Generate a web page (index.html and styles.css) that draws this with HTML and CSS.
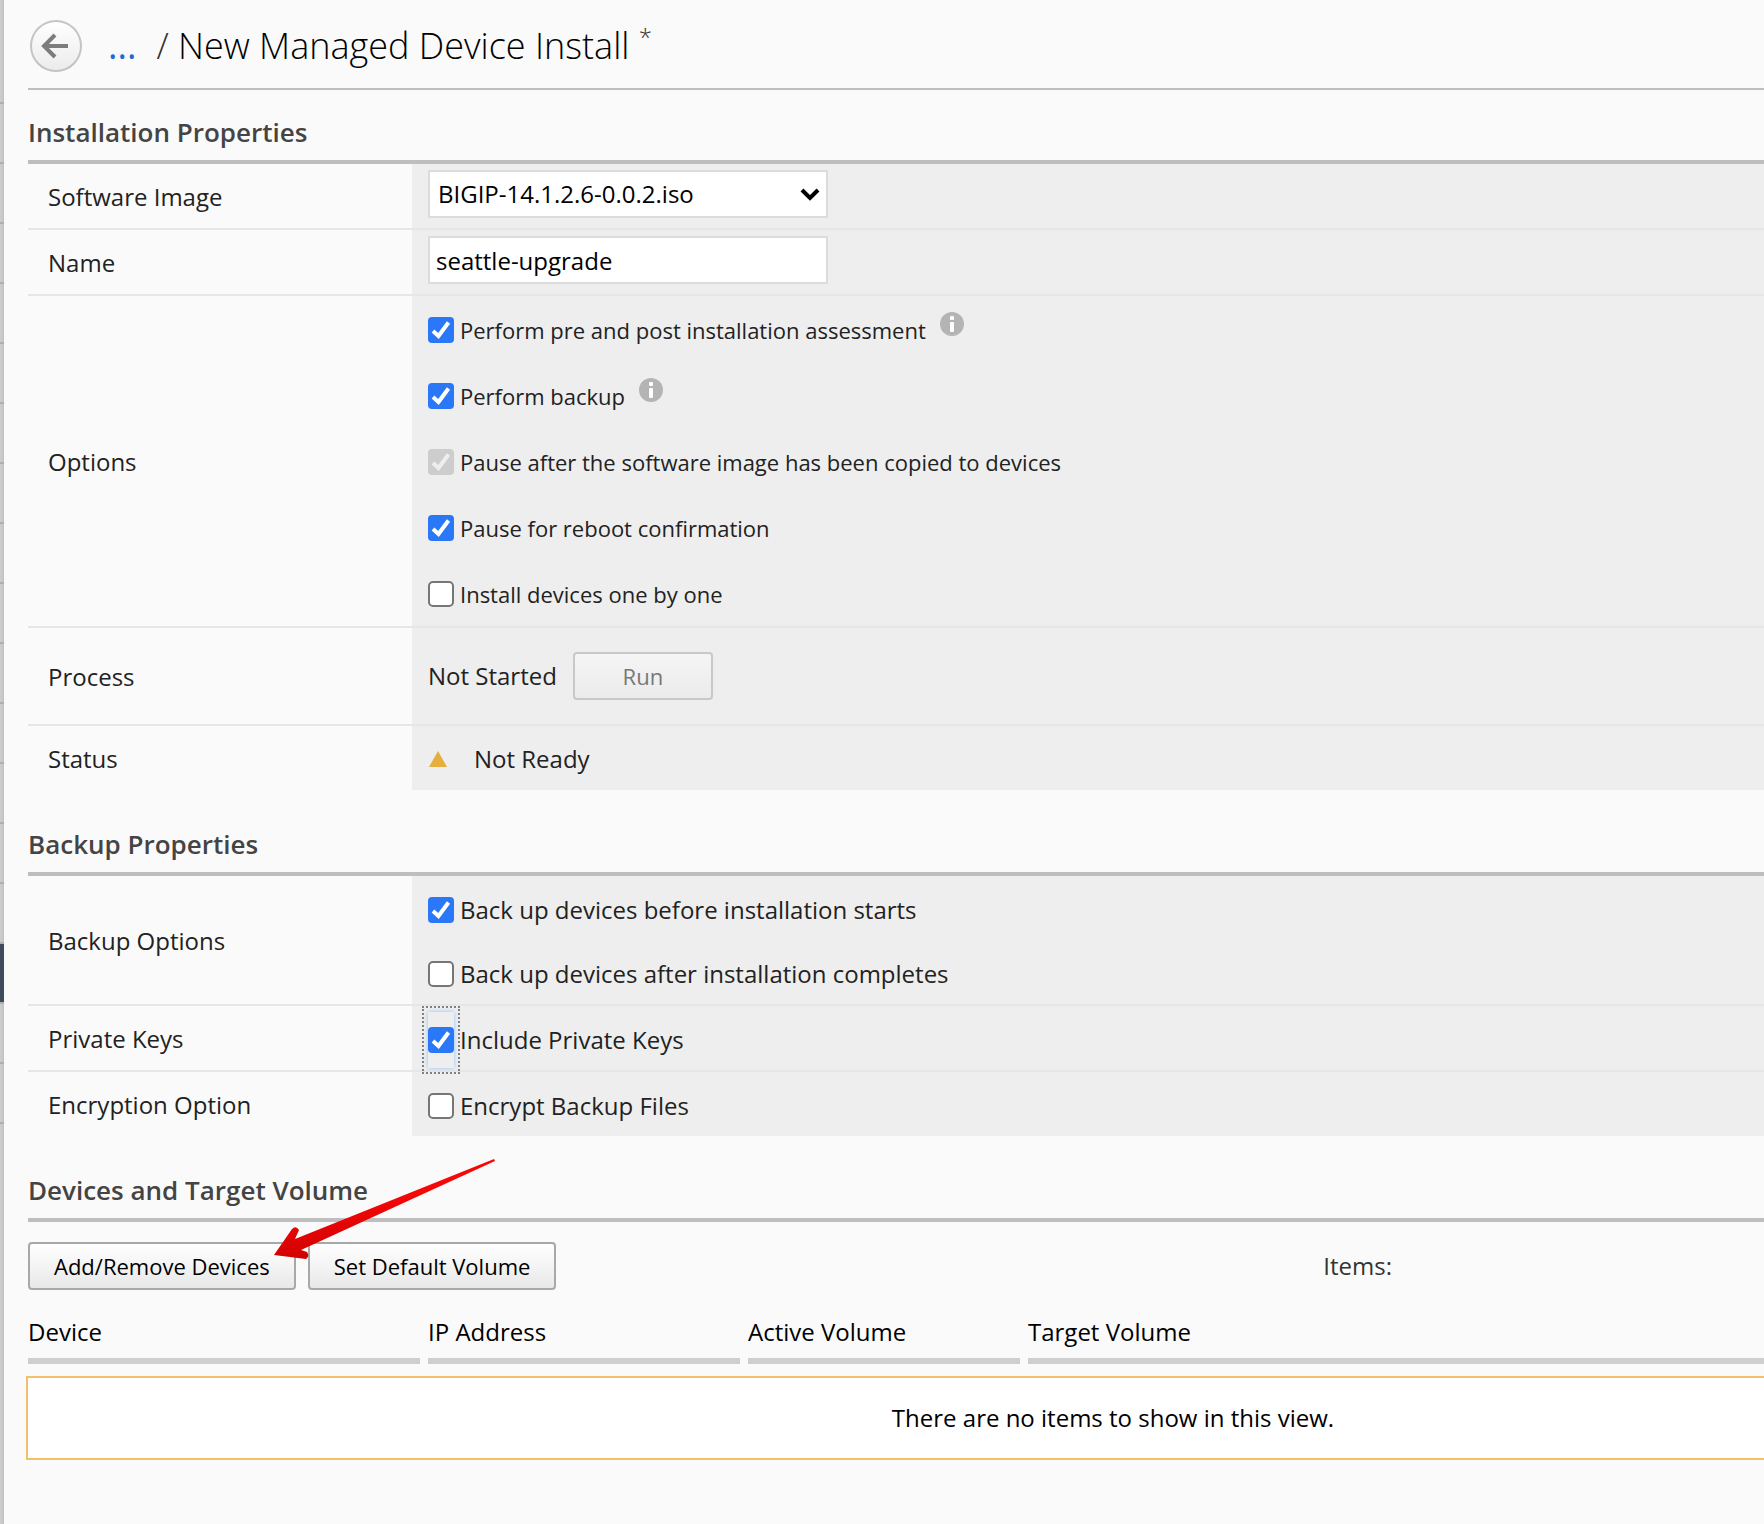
FILE: index.html
```html
<!DOCTYPE html>
<html lang="en">
<head>
<meta charset="utf-8">
<title>New Managed Device Install</title>
<link rel="stylesheet" href="styles.css">
</head>
<body>
<div class="app">
  <div class="rail" aria-hidden="true">
    <span class="rail-item rail-top"></span>
    <span class="rail-item"></span><span class="rail-item"></span><span class="rail-item"></span><span class="rail-item"></span>
    <span class="rail-item"></span><span class="rail-item"></span><span class="rail-item"></span><span class="rail-item"></span>
    <span class="rail-item"></span><span class="rail-item"></span><span class="rail-item"></span><span class="rail-item"></span>
    <span class="rail-item"></span><span class="rail-item"></span>
    <span class="rail-item active"></span>
    <span class="rail-item"></span><span class="rail-item"></span>
  </div>
  <main class="page">
    <header class="page-head">
      <button class="back" type="button" aria-label="Back">
        <svg viewBox="0 0 52 52" width="52" height="52"><path d="M38 26H15M25 15L14 26L25 37" fill="none" stroke="#7c7c7c" stroke-width="4"/></svg>
      </button>
      <a class="crumb" href="#">...</a>
      <h1 class="title"><span class="slash">/</span> New Managed Device Install <sup class="dirty">*</sup></h1>
    </header>

    <section class="section">
      <h2 class="section-title">Installation Properties</h2>
      <div class="props">
        <div class="row">
          <label class="row-label" for="image">Software Image</label>
          <div class="row-value has-field">
            <div class="select-wrap">
              <select class="field" id="image"><option>BIGIP-14.1.2.6-0.0.2.iso</option></select>
              <svg class="chevron" viewBox="0 0 20 14" width="20" height="14"><path d="M2 3L10 11L18 3" fill="none" stroke="#000" stroke-width="4"/></svg>
            </div>
          </div>
        </div>
        <div class="row">
          <label class="row-label" for="name">Name</label>
          <div class="row-value has-field"><input class="field" id="name" type="text" value="seattle-upgrade"></div>
        </div>
        <div class="row">
          <div class="row-label">Options</div>
          <div class="row-value stack small">
            <div class="option"><input class="check" type="checkbox" id="o1" checked><label for="o1">Perform pre and post installation assessment</label>
              <svg class="info" viewBox="0 0 24 24" width="24" height="24"><circle cx="12" cy="12" r="12" fill="#b4b4b4"/><rect x="10" y="4" width="4" height="4" rx="1" fill="#fff"/><rect x="10" y="10" width="4" height="10" rx="1" fill="#fff"/></svg></div>
            <div class="option"><input class="check" type="checkbox" id="o2" checked><label for="o2">Perform backup</label>
              <svg class="info" viewBox="0 0 24 24" width="24" height="24"><circle cx="12" cy="12" r="12" fill="#b4b4b4"/><rect x="10" y="4" width="4" height="4" rx="1" fill="#fff"/><rect x="10" y="10" width="4" height="10" rx="1" fill="#fff"/></svg></div>
            <div class="option"><input class="check" type="checkbox" id="o3" checked disabled><label for="o3">Pause after the software image has been copied to devices</label></div>
            <div class="option"><input class="check" type="checkbox" id="o4" checked><label for="o4">Pause for reboot confirmation</label></div>
            <div class="option"><input class="check" type="checkbox" id="o5"><label for="o5">Install devices one by one</label></div>
          </div>
        </div>
        <div class="row row-tall">
          <div class="row-label">Process</div>
          <div class="row-value"><span>Not Started</span><button class="btn btn-run" type="button" disabled>Run</button></div>
        </div>
        <div class="row">
          <div class="row-label">Status</div>
          <div class="row-value status"><svg viewBox="0 0 20 18" width="20" height="18"><path d="M10 1L19 17H1Z" fill="#e5ae3d"/></svg><span>Not Ready</span></div>
        </div>
      </div>
    </section>

    <section class="section">
      <h2 class="section-title">Backup Properties</h2>
      <div class="props">
        <div class="row">
          <div class="row-label">Backup Options</div>
          <div class="row-value stack compact">
            <div class="option"><input class="check" type="checkbox" id="b1" checked><label for="b1">Back up devices before installation starts</label></div>
            <div class="option"><input class="check" type="checkbox" id="b2"><label for="b2">Back up devices after installation completes</label></div>
          </div>
        </div>
        <div class="row">
          <div class="row-label">Private Keys</div>
          <div class="row-value single"><div class="option focused"><input class="check" type="checkbox" id="pk" checked><label for="pk">Include Private Keys</label></div></div>
        </div>
        <div class="row">
          <div class="row-label">Encryption Option</div>
          <div class="row-value single"><div class="option"><input class="check" type="checkbox" id="en"><label for="en">Encrypt Backup Files</label></div></div>
        </div>
      </div>
    </section>

    <section class="section">
      <h2 class="section-title">Devices and Target Volume</h2>
      <div class="toolbar">
        <div class="add-wrap">
          <button class="btn" type="button">Add/Remove Devices</button>
          <svg class="arrow" viewBox="0 0 224 104" width="224" height="104">
            <defs><linearGradient id="red" x1="0" y1="0" x2="0.300" y2="1"><stop offset="0.500" stop-color="#f40808"/><stop offset="1" stop-color="#cc0000"/></linearGradient></defs>
            <path d="M0 96L18 70Q22 66 25 71L21 80L220 0L221 2L27 91L33 93Q36 97 32 100Z" fill="url(#red)"/>
          </svg>
        </div>
        <button class="btn" type="button">Set Default Volume</button>
        <span class="items">Items:</span>
      </div>
      <table class="devices">
        <thead>
          <tr><th class="c-device">Device</th><th class="c-ip">IP Address</th><th class="c-active">Active Volume</th><th>Target Volume</th></tr>
        </thead>
      </table>
      <p class="empty">There are no items to show in this view.</p>
    </section>
  </main>
</div>
</body>
</html>
```
FILE: styles.css
```css
*, *::before, *::after { box-sizing: border-box; }

body {
  margin: 0;
  background: #fafafa;
  color: #222;
  font: 24px/32px "Open Sans", "Noto Sans", sans-serif;
}

.app { display: flex; min-height: 100vh; overflow: hidden; }

.rail {
  flex: 0 0 4px;
  display: flex;
  flex-direction: column;
  background: linear-gradient(90deg, #cdced0, #bfc1c3);
}
.rail-item { height: 60px; border-bottom: 2px solid #acb0b7; }
.rail-top { height: 104px; }
.rail-item.active { background: #3f4a5d; }

.page { flex: 1; min-width: 0; padding-left: 24px; }

.page-head {
  display: flex;
  align-items: center;
  height: 90px;
  padding-top: 4px;
  border-bottom: 2px solid #bebebe;
}
.back {
  width: 52px;
  height: 52px;
  margin: 0 26px 0 2px;
  padding: 0;
  border: 0;
  border-radius: 50%;
  background: linear-gradient(#fff, #ebebeb);
  box-shadow: inset 0 0 0 2px #c4c4c4;
}
.back svg { display: block; }
.crumb { color: #2468d2; font-size: 36px; text-decoration: none; }
.title {
  margin: 0 0 0 20px;
  color: #000;
  font-size: 36px;
  font-weight: 300;
  line-height: 48px;
}
.slash { color: #333; }
.dirty { font-size: 24px; line-height: 0; color: #333; }

.section { padding-top: 24px; }
.section + .section { padding-top: 36px; }
.section-title {
  margin: 0;
  padding-bottom: 10px;
  border-bottom: 4px solid #bebebe;
  color: #444;
  font-size: 26px;
  font-weight: 600;
  line-height: 36px;
}

.row { display: flex; min-height: 66px; border-bottom: 2px solid #e6e6e6; }
.row:last-child { min-height: 64px; border-bottom: 0; }
.row-tall { min-height: 98px; }
.row-label { flex: 0 0 384px; display: flex; align-items: center; padding: 2px 0 0 20px; }
.row-value {
  flex: 1;
  display: flex;
  align-items: center;
  gap: 16px;
  padding-left: 16px;
  background: #eee;
}
.has-field { padding-bottom: 4px; }
.single { padding-top: 4px; }
.stack { flex-direction: column; align-items: flex-start; gap: 0; }
.small { font-size: 22px; }
.small .option { height: 66px; padding-top: 2px; }
.compact .option { height: 64px; padding-top: 4px; }

.field {
  width: 400px;
  height: 48px;
  margin: 0;
  padding: 0 6px;
  border: 2px solid #dcdcdc;
  border-radius: 0;
  background: #fff;
  color: #000;
  font: inherit;
  appearance: none;
}
select.field { padding-left: 8px; }
.select-wrap { position: relative; display: flex; }
.chevron { position: absolute; right: 8px; top: 17px; pointer-events: none; }

.option { display: flex; align-items: center; gap: 6px; }
.check {
  flex: none;
  width: 26px;
  height: 26px;
  margin: 0;
  border: 2px solid #767676;
  border-radius: 5px;
  background: #fff;
  appearance: none;
}
.check:checked {
  border: 0;
  border-radius: 4px;
  background: #2a78f8 url("data:image/svg+xml,%3Csvg xmlns='http://www.w3.org/2000/svg' viewBox='0 0 26 26'%3E%3Cpath d='M5 14L10.500 19L20.500 5.500' fill='none' stroke='%23fff' stroke-width='4'/%3E%3C/svg%3E");
}
.check:disabled {
  background-color: #cdcdcd;
  background-image: url("data:image/svg+xml,%3Csvg xmlns='http://www.w3.org/2000/svg' viewBox='0 0 26 26'%3E%3Cpath d='M5 14L10.500 19L20.500 5.500' fill='none' stroke='%23eee' stroke-width='4'/%3E%3C/svg%3E");
}
.info { margin: 0 0 12px 8px; }

.focused { position: relative; }
.focused::before {
  content: "";
  position: absolute;
  inset: -18px auto -18px -6px;
  width: 38px;
  border: 2px dotted #808080;
}
.focused::after {
  content: "";
  position: absolute;
  inset: -12px auto -12px 0;
  width: 26px;
  box-shadow: 0 0 4px #8cc0f8;
}
.focused .check { position: relative; z-index: 1; }

.status { gap: 26px; padding-top: 2px; }

.btn {
  display: block;
  height: 48px;
  padding: 0 24px;
  border: 2px solid #a8a8a8;
  border-radius: 4px;
  background: linear-gradient(#fff, #e8e8e8);
  color: #000;
  font: inherit;
  font-size: 22px;
}
.btn:disabled { border-color: #c8c8c8; background: linear-gradient(#f5f5f5, #ebebeb); color: #777; }
.btn-run { width: 140px; }

.toolbar { display: flex; align-items: center; gap: 12px; padding: 20px 372px 20px 0; }
.add-wrap { position: relative; }
.arrow { position: absolute; left: 246px; top: -83px; z-index: 1; pointer-events: none; }
.items { margin-left: auto; color: #333; }

.devices { width: 100%; border-collapse: collapse; table-layout: fixed; color: #000; }
.devices th { padding: 6px 0 12px; font-weight: 400; text-align: left; }
.devices th::after { content: ""; display: block; height: 6px; margin: 10px 8px 0 0; background: #cfcfcf; }
.devices th:last-child::after { margin-right: 0; }
.c-device { width: 400px; }
.c-ip { width: 320px; }
.c-active { width: 280px; }

.empty {
  margin: 0 0 0 -2px;
  padding: 24px 0 24px 434px;
  border: 2px solid #f2c069;
  border-right: 0;
  background: #fff;
  color: #000;
  text-align: center;
}
```
